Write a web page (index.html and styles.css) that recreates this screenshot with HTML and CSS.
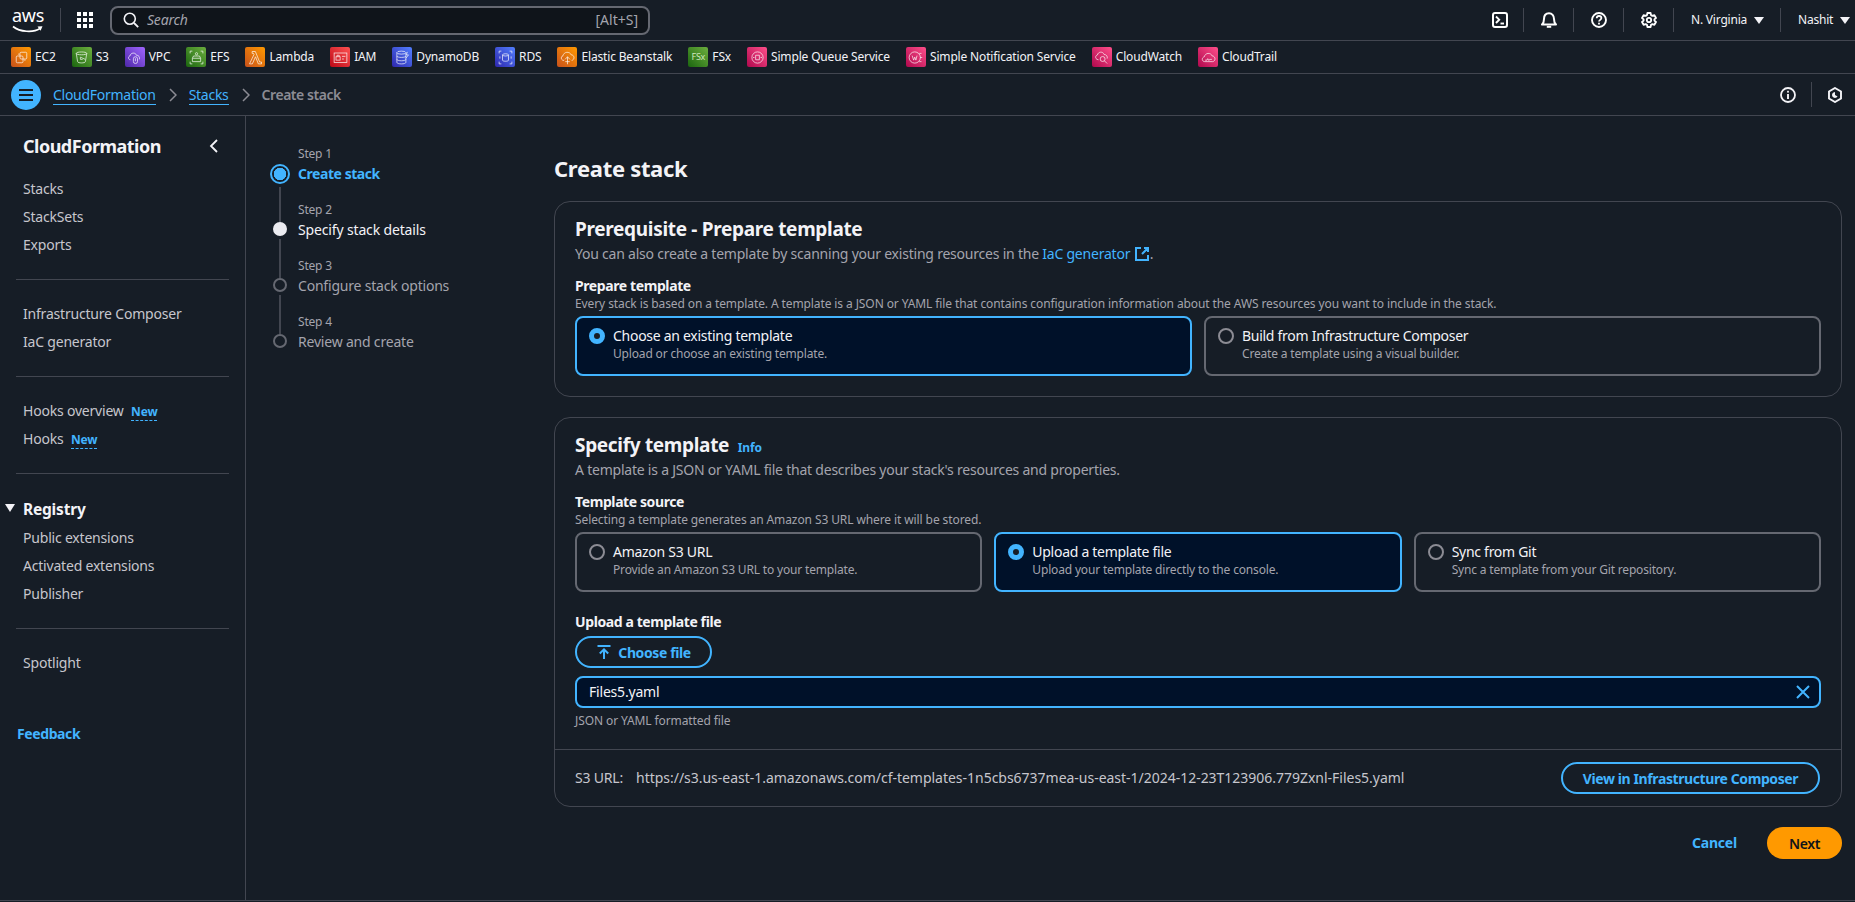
FILE: index.html
```html
<!DOCTYPE html>
<html lang="en">
<head>
    <meta charset="UTF-8">
    <meta name="viewport" content="width=device-width, initial-scale=1.0">
    <title>Create stack - CloudFormation</title>
    <link rel="stylesheet" href="styles.css">
</head>
<body>
    <!-- Top navigation -->
    <header class="topbar">
        <div class="aws-logo">
            <span class="aws-word">aws</span>
            <svg class="aws-smile" viewBox="0 0 32 9" width="32" height="9"><path d="M1 1.5C8 7 21 8 28 3.5" fill="none" stroke="#fff" stroke-width="1.7"/><path d="M25.5 1.6L30.5 1.2 28.6 5.8" fill="#fff"/></svg>
        </div>
        <span class="top-divider first"></span>
        <svg class="grid-icon" viewBox="0 0 16 16" width="16" height="16"><g fill="#fff"><rect x="0" y="0" width="4" height="4"/><rect x="6" y="0" width="4" height="4"/><rect x="12" y="0" width="4" height="4"/><rect x="0" y="6" width="4" height="4"/><rect x="6" y="6" width="4" height="4"/><rect x="12" y="6" width="4" height="4"/><rect x="0" y="12" width="4" height="4"/><rect x="6" y="12" width="4" height="4"/><rect x="12" y="12" width="4" height="4"/></g></svg>
        <div class="search">
            <svg viewBox="0 0 16 16" width="16" height="16"><circle cx="6.8" cy="6.8" r="5.5" fill="none" stroke="#f3f3f7" stroke-width="1.6"/><path d="M11 11l4.2 4.2" stroke="#f3f3f7" stroke-width="1.8"/></svg>
            <span class="search-text">Search</span>
            <span class="search-key">[Alt+S]</span>
        </div>
        <div class="top-right">
            <span class="top-icon"><svg viewBox="0 0 16 16" width="16" height="16"><rect x="1" y="1" width="14" height="14" rx="2" fill="none" stroke="#fff" stroke-width="2"/><path d="M4 4.5L7.2 7.7 4 11" fill="none" stroke="#fff" stroke-width="1.9"/><path d="M8.5 11.5H12" stroke="#fff" stroke-width="1.9"/></svg></span>
            <span class="top-divider"></span>
            <span class="top-icon"><svg viewBox="0 0 16 16" width="16" height="16"><path d="M1 12.5h14c-1.8-1.6-2-3-2-5.5C13 3.5 11 1.3 8 1.3S3 3.500 3 7c0 2.500-.2 3.900-2 5.500z" fill="none" stroke="#fff" stroke-width="2" stroke-linejoin="round"/><path d="M5.800 14.800h4.400" stroke="#fff" stroke-width="2"/></svg></span>
            <span class="top-divider"></span>
            <span class="top-icon"><svg viewBox="0 0 16 16" width="16" height="16"><circle cx="8" cy="8" r="7" fill="none" stroke="#fff" stroke-width="1.9"/><path d="M5.700 6.200C5.800 4.800 6.800 4 8 4c1.400 0 2.400.9 2.400 2.100 0 1.700-2.400 1.800-2.400 3.500" fill="none" stroke="#fff" stroke-width="1.8"/><rect x="7.100" y="10.700" width="1.800" height="1.800" fill="#fff"/></svg></span>
            <span class="top-divider"></span>
            <span class="top-icon"><svg viewBox="0 0 16 16" width="16" height="16"><path d="M6.400 1h3.200l.4 2.100 1.400.8 2-.7 1.600 2.800-1.600 1.400v1.200l1.600 1.400-1.600 2.800-2-.7-1.400.8-.4 2.100H6.400L6 12.900l-1.400-.8-2 .7L1 10l1.600-1.400V7.400L1 6l1.600-2.800 2 .7L6 3.100z" fill="none" stroke="#fff" stroke-width="1.800" stroke-linejoin="round"/><circle cx="8" cy="8" r="2.200" fill="none" stroke="#fff" stroke-width="1.800"/></svg></span>
            <span class="top-divider"></span>
            <span class="top-menu region">N. Virginia<i class="caret"></i></span>
            <span class="top-divider"></span>
            <span class="top-menu user">Nashit<i class="caret"></i></span>
        </div>
    </header>

    <!-- Pinned services -->
    <nav class="favbar">
        <a class="fav"><span class="svc orange"><svg viewBox="0 0 20 20"><rect x="8" y="3" width="9" height="9" rx="1.500"/><rect x="3" y="8" width="9" height="9" rx="1.500"/><path d="M5.500 5.500h2M14.500 12.500v2"/></svg></span>EC2</a>
        <a class="fav"><span class="svc green"><svg viewBox="0 0 20 20"><path d="M3 4.500c0-2.500 14-2.500 14 0l-1.800 11c-.4 2.300-10 2.300-10.400 0z"/><path d="M3 4.500c0 2.500 14 2.500 14 0"/><path d="M8.500 9.500l6.500 3M8.500 9.500v3h3"/></svg></span>S3</a>
        <a class="fav"><span class="svc purple"><svg viewBox="0 0 20 20"><path d="M4.500 13C1.500 13 1 8.500 4 8c.3-4.500 7.500-5.500 8.500-1 3-.3 5 2.500 4 5.500"/><rect x="8.500" y="9" width="5.500" height="9" rx="2.700"/><path d="M11.200 11v4"/></svg></span>VPC</a>
        <a class="fav"><span class="svc green"><svg viewBox="0 0 20 20"><path d="M6 8h8l1.500 3v4.500h-11V11zM4.500 11h11"/><circle cx="10" cy="5" r="1.500"/><path d="M1.500 4.500V1.500h3M15.500 1.500h3v3M1.500 15.500v3h3M15.500 18.500h3v-3"/></svg></span>EFS</a>
        <a class="fav"><span class="svc orange"><svg viewBox="0 0 20 20"><path d="M5.500 2h4.300l5.700 14H18v2.500h-4.200L10 9 5.800 18.500H2L8 6 7.300 4.500H5.500z"/></svg></span>Lambda</a>
        <a class="fav"><span class="svc red"><svg viewBox="0 0 20 20"><rect x="1.500" y="4" width="17" height="12.500"/><rect x="4" y="9" width="5.500" height="4.500"/><path d="M5.300 9V7h3v2M12 8.500h4.500M12 12h2.500"/></svg></span>IAM</a>
        <a class="fav"><span class="svc blue"><svg viewBox="0 0 20 20"><ellipse cx="8.500" cy="3.500" rx="6" ry="2"/><path d="M2.500 3.500v13c0 2.700 12 2.700 12 0v-13M2.500 8c0 2.500 12 2.500 12 0M2.500 12.500c0 2.500 12 2.500 12 0"/><path d="M14.500 11l3.500-4.500h-3l1.500-4"/></svg></span>DynamoDB</a>
        <a class="fav"><span class="svc blue"><svg viewBox="0 0 20 20"><ellipse cx="10" cy="6.500" rx="4" ry="1.500"/><path d="M6 6.500v7c0 2 8 2 8 0v-7"/><path d="M1.500 4.500v-3h3M15.500 1.500h3v3M1.500 15.500v3h3M15.500 18.500h3v-3M2.500 8.500v3M17.500 8.500v3"/></svg></span>RDS</a>
        <a class="fav"><span class="svc orange"><svg viewBox="0 0 20 20"><path d="M5.500 14C1 14 .5 8.500 4 7.700 5 2 13 1.500 15 6.500c4.500 0 5 6.500.5 7.500"/><path d="M10 19V9M6.800 12.500L10 9l3.200 3.500M7 15.500h6"/></svg></span>Elastic Beanstalk</a>
        <a class="fav"><span class="svc green"><span class="fsx">FSx</span></span>FSx</a>
        <a class="fav"><span class="svc pink"><svg viewBox="0 0 20 20"><circle cx="10" cy="10" r="7.500"/><path d="M7.500 7h5v6h-5zM4 10h2M14 10h2"/></svg></span>Simple Queue Service</a>
        <a class="fav"><span class="svc pink"><svg viewBox="0 0 20 20"><circle cx="9" cy="10" r="7.500"/><path d="M5.500 7.500l2 6L9 9.500l1.500 4 1.500-6M15 4.500h3M16 10h3M15 15.500h3"/></svg></span>Simple Notification Service</a>
        <a class="fav"><span class="svc pink"><svg viewBox="0 0 20 20"><path d="M6 13C1.500 13 1 7.500 4.500 6.700 5.500 2 12 1.500 13.500 6c3 0 5 2.500 4 5.500"/><circle cx="11.500" cy="12" r="3.300"/><path d="M14 14.500l3.500 3.500"/></svg></span>CloudWatch</a>
        <a class="fav"><span class="svc pink"><svg viewBox="0 0 20 20"><path d="M5 15.500C1 15.500.5 10 4.500 9 5.500 3.500 13 3 15 8c4.500 0 5 7 .5 7.500z"/><path d="M5.500 13.500h2.500l1-2 1.500 2.500 1-1.500h3"/></svg></span>CloudTrail</a>
    </nav>

    <!-- Breadcrumbs -->
    <div class="crumbbar">
        <span class="menu-btn"><svg viewBox="0 0 16 14" width="16" height="14"><path d="M1 2h14M1 7h14M1 12h14" stroke="#161d26" stroke-width="2"/></svg></span>
        <a class="crumb">CloudFormation</a>
        <svg class="crumb-sep" viewBox="0 0 8 14" width="8" height="14"><path d="M1 1l6 6-6 6" fill="none" stroke="#8c8c94" stroke-width="1.500"/></svg>
        <a class="crumb">Stacks</a>
        <svg class="crumb-sep" viewBox="0 0 8 14" width="8" height="14"><path d="M1 1l6 6-6 6" fill="none" stroke="#8c8c94" stroke-width="1.500"/></svg>
        <span class="crumb-current">Create stack</span>
        <div class="crumb-right">
            <svg viewBox="0 0 16 16" width="16" height="16"><circle cx="8" cy="8" r="7" fill="none" stroke="#f3f3f7" stroke-width="1.800"/><path d="M8 7v5" stroke="#f3f3f7" stroke-width="1.900"/><rect x="7.100" y="3.800" width="1.800" height="1.800" fill="#f3f3f7"/></svg>
            <span class="crumb-divider"></span>
            <svg viewBox="0 0 16 16" width="16" height="16"><path d="M8 1l6 3.500v7L8 15l-6-3.500v-7z" fill="none" stroke="#f3f3f7" stroke-width="1.900"/><path d="M8 5a3 3 0 1 0 2.600 4.500L8 8z" fill="#f3f3f7"/></svg>
        </div>
    </div>

    <div class="layout">
        <!-- Side navigation -->
        <aside class="sidenav">
            <div class="sidenav-head">
                <h2>CloudFormation</h2>
                <svg viewBox="0 0 10 16" width="10" height="16"><path d="M8 2L2 8l6 6" fill="none" stroke="#f3f3f7" stroke-width="1.800"/></svg>
            </div>
            <ul class="nav-list first">
                <li>Stacks</li>
                <li>StackSets</li>
                <li>Exports</li>
            </ul>
            <hr>
            <ul class="nav-list">
                <li>Infrastructure Composer</li>
                <li>IaC generator</li>
            </ul>
            <hr>
            <ul class="nav-list">
                <li>Hooks overview <span class="new">New</span></li>
                <li>Hooks <span class="new">New</span></li>
            </ul>
            <hr>
            <div class="nav-group"><i class="group-arrow"></i>Registry</div>
            <ul class="nav-list">
                <li>Public extensions</li>
                <li>Activated extensions</li>
                <li>Publisher</li>
            </ul>
            <hr>
            <ul class="nav-list">
                <li>Spotlight</li>
            </ul>
            <a class="feedback">Feedback</a>
        </aside>

        <!-- Wizard steps -->
        <ol class="steps">
            <li class="step current">
                <div class="step-mark"><span class="seg hidden"></span><span class="dot"></span><span class="seg"></span></div>
                <div><div class="step-num">Step 1</div><div class="step-title">Create stack</div></div>
            </li>
            <li class="step done">
                <div class="step-mark"><span class="seg"></span><span class="dot"></span><span class="seg"></span></div>
                <div><div class="step-num">Step 2</div><div class="step-title">Specify stack details</div></div>
            </li>
            <li class="step">
                <div class="step-mark"><span class="seg"></span><span class="dot"></span><span class="seg"></span></div>
                <div><div class="step-num">Step 3</div><div class="step-title">Configure stack options</div></div>
            </li>
            <li class="step">
                <div class="step-mark"><span class="seg"></span><span class="dot"></span></div>
                <div><div class="step-num">Step 4</div><div class="step-title">Review and create</div></div>
            </li>
        </ol>

        <main class="content">
            <h1>Create stack</h1>

            <section class="card">
                <div class="card-body">
                    <h3>Prerequisite - Prepare template</h3>
                    <p class="card-desc">You can also create a template by scanning your existing resources in the <a class="link">IaC generator <svg viewBox="0 0 16 16" width="16" height="16"><path d="M7 2H2v12h12V9M10 2h4v4M14 2L8 8" fill="none" stroke="#42b4ff" stroke-width="2"/></svg></a>.</p>
                    <div class="field-label">Prepare template</div>
                    <div class="field-desc">Every stack is based on a template. A template is a JSON or YAML file that contains configuration information about the AWS resources you want to include in the stack.</div>
                    <div class="tiles two">
                        <div class="tile selected"><span class="radio"></span><div><div class="tile-title">Choose an existing template</div><div class="tile-desc">Upload or choose an existing template.</div></div></div>
                        <div class="tile"><span class="radio"></span><div><div class="tile-title">Build from Infrastructure Composer</div><div class="tile-desc">Create a template using a visual builder.</div></div></div>
                    </div>
                </div>
            </section>

            <section class="card">
                <div class="card-body">
                    <h3>Specify template <a class="info">Info</a></h3>
                    <p class="card-desc">A template is a JSON or YAML file that describes your stack's resources and properties.</p>
                    <div class="field-label">Template source</div>
                    <div class="field-desc">Selecting a template generates an Amazon S3 URL where it will be stored.</div>
                    <div class="tiles three">
                        <div class="tile"><span class="radio"></span><div><div class="tile-title">Amazon S3 URL</div><div class="tile-desc">Provide an Amazon S3 URL to your template.</div></div></div>
                        <div class="tile selected"><span class="radio"></span><div><div class="tile-title">Upload a template file</div><div class="tile-desc">Upload your template directly to the console.</div></div></div>
                        <div class="tile"><span class="radio"></span><div><div class="tile-title">Sync from Git</div><div class="tile-desc">Sync a template from your Git repository.</div></div></div>
                    </div>
                    <div class="field-label upload">Upload a template file</div>
                    <button class="btn choose"><svg viewBox="0 0 16 16" width="16" height="16"><path d="M1.500 2h13M8 15V5.500M3.800 9.500L8 5.300l4.200 4.200" fill="none" stroke="#42b4ff" stroke-width="2"/></svg>Choose file</button>
                    <div class="file-input"><span>Files5.yaml</span><svg viewBox="0 0 16 16" width="16" height="16"><path d="M2 2l12 12M14 2L2 14" stroke="#42b4ff" stroke-width="2"/></svg></div>
                    <div class="field-desc helper">JSON or YAML formatted file</div>
                </div>
                <div class="card-foot">
                    <span class="s3-label">S3 URL:</span>
                    <span class="s3-url">https://s3.us-east-1.amazonaws.com/cf-templates-1n5cbs6737mea-us-east-1/2024-12-23T123906.779Zxnl-Files5.yaml</span>
                    <button class="btn view">View in Infrastructure Composer</button>
                </div>
            </section>

            <div class="actions">
                <a class="cancel">Cancel</a>
                <button class="btn next">Next</button>
            </div>
        </main>
    </div>
</body>
</html>
```

FILE: styles.css
```css
* {
    box-sizing: border-box;
}

html, body {
    height: 902px;
    overflow: hidden;
}

body {
    margin: 0;
    background-color: #161d26;
    color: #c6c6cd;
    font-family: "Noto Sans", Arial, sans-serif;
    font-size: 14px;
    line-height: 20px;
    letter-spacing: -0.2px;
}

a {
    cursor: pointer;
}

/* Top navigation */
.topbar {
    display: flex;
    align-items: center;
    height: 41px;
    border-bottom: 1px solid #424650;
    padding-left: 12px;
    color: #f3f3f7;
}

.aws-logo {
    display: flex;
    flex-direction: column;
    width: 32px;
    height: 28px;
    align-items: center;
}

.aws-word {
    font-size: 18px;
    line-height: 19px;
    color: #fff;
    letter-spacing: -0.3px;
}

.aws-smile {
    display: block;
}

.top-divider {
    width: 1px;
    height: 24px;
    background-color: #424650;
}

.top-divider.first {
    margin-left: 16px;
}

.grid-icon {
    margin-left: 16px;
}

.search {
    display: flex;
    align-items: center;
    width: 540px;
    height: 29px;
    margin-left: 17px;
    padding: 0 10px 0 11px;
    background-color: #0f141a;
    border: 2px solid #656871;
    border-radius: 8px;
}

.search-text {
    margin-left: 8px;
    font-style: italic;
    color: #a4a4ad;
}

.search-key {
    margin-left: auto;
    color: #a4a4ad;
    letter-spacing: 0;
}

.top-right {
    display: flex;
    align-items: center;
    margin-left: auto;
}

.top-icon {
    display: flex;
    justify-content: center;
    width: 49px;
}

.top-icon:first-child {
    width: 46px;
}

.top-menu {
    display: flex;
    align-items: center;
    font-size: 12px;
    color: #f3f3f7;
}

.region {
    width: 106px;
    padding-left: 17px;
}

.user {
    width: 74px;
    padding-left: 17px;
}

.caret {
    width: 0;
    height: 0;
    margin-left: 7px;
    border-left: 5px solid transparent;
    border-right: 5px solid transparent;
    border-top: 7px solid #f3f3f7;
}

/* Pinned services */
.favbar {
    display: flex;
    align-items: center;
    gap: 16px;
    height: 33px;
    padding-left: 11px;
    border-bottom: 1px solid #424650;
}

.fav {
    display: flex;
    align-items: center;
    gap: 4px;
    color: #f3f3f7;
    font-size: 12px;
    letter-spacing: -0.16px;
    white-space: nowrap;
}

.svc {
    display: flex;
    align-items: center;
    justify-content: center;
    width: 20px;
    height: 20px;
    border-radius: 2px;
}

.svc svg {
    width: 15px;
    height: 15px;
    fill: none;
    stroke: #fff;
    stroke-width: 1;
    opacity: 0.9;
}

.orange { background: linear-gradient(45deg, #c8511b, #ff9900); }
.green { background: linear-gradient(45deg, #1b660f, #6cae3e); }
.purple { background: linear-gradient(45deg, #4d27a8, #a166ff); }
.red { background: linear-gradient(45deg, #bd0816, #ff5252); }
.blue { background: linear-gradient(45deg, #2e27ad, #527fff); }
.pink { background: linear-gradient(45deg, #b0084d, #ff4f8b); }

.fsx {
    font-size: 9px;
    color: #cfe6bd;
    letter-spacing: -0.3px;
}

/* Breadcrumbs */
.crumbbar {
    display: flex;
    align-items: center;
    height: 42px;
    padding-left: 11px;
    border-bottom: 1px solid #424650;
}

.menu-btn {
    display: flex;
    align-items: center;
    justify-content: center;
    width: 30px;
    height: 30px;
    margin-right: 12px;
    border-radius: 50%;
    background-color: #42b4ff;
}

.crumb {
    color: #42b4ff;
    border-bottom: 1px solid #42b4ff;
    line-height: 19px;
    letter-spacing: -0.27px;
}

.crumb-sep {
    margin: 0 12px 0 13px;
}

.crumb-current {
    color: #8c8c94;
    font-weight: 600;
    letter-spacing: -0.45px;
}

.crumb-right {
    display: flex;
    align-items: center;
    margin-left: auto;
    padding-right: 12px;
}

.crumb-divider {
    width: 1px;
    height: 25px;
    margin: 0 15px;
    background-color: #424650;
}

/* Page layout */
.layout {
    display: grid;
    grid-template-columns: 246px 308px 1301px;
    height: 785px;
    border-bottom: 1px solid #424650;
}

.sidenav {
    border-right: 1px solid #424650;
    padding: 19px 16px 0;
}

.sidenav-head {
    display: flex;
    align-items: center;
    justify-content: space-between;
    padding: 0 10px 0 7px;
}

.sidenav-head h2 {
    margin: 0;
    font-size: 18px;
    line-height: 22px;
    color: #f3f3f7;
    font-weight: 700;
    letter-spacing: -0.5px;
}

.nav-list {
    margin: 0;
    padding: 0 0 0 7px;
    list-style: none;
}

.nav-list.first {
    margin-top: 18px;
}

.nav-list li {
    height: 28px;
    line-height: 28px;
    white-space: nowrap;
}

.sidenav hr {
    margin: 20px 0;
    border: 0;
    border-top: 1px solid #424650;
}

.new {
    margin-left: 4px;
    color: #42b4ff;
    font-size: 12px;
    font-weight: 700;
    border-bottom: 1px dashed #42b4ff;
}

.nav-group {
    position: relative;
    height: 30px;
    padding: 1px 0 0 7px;
    line-height: 28px;
    color: #f3f3f7;
    font-weight: 700;
    font-size: 15.500px;
}

.group-arrow {
    position: absolute;
    left: -11px;
    top: 10px;
    border-left: 5.500px solid transparent;
    border-right: 5.500px solid transparent;
    border-top: 8px solid #f3f3f7;
}

.feedback {
    display: block;
    margin-top: 47px;
    color: #42b4ff;
    font-weight: 700;
    padding-left: 1px;
    letter-spacing: -0.4px;
}

/* Wizard steps */
.steps {
    margin: 0;
    padding: 28px 0 0 24px;
    list-style: none;
}

.step {
    display: flex;
    height: 56px;
    gap: 8px;
}

.step-mark {
    display: flex;
    flex-direction: column;
    align-items: center;
    width: 20px;
    height: 56px;
}

.seg {
    width: 2px;
    background-color: #424650;
}

.seg:first-child {
    height: 22px;
    flex: none;
}

.seg:last-child {
    flex: 1;
    margin-top: 3px;
}

.seg.hidden {
    background-color: transparent;
}

.dot {
    flex: none;
    width: 14px;
    height: 14px;
    border: 2px solid #656871;
    border-radius: 50%;
}

.step-num {
    font-size: 12px;
    line-height: 20px;
    color: #a4a4ad;
}

.step-title {
    line-height: 20px;
    color: #a4a4ad;
    white-space: nowrap;
}

.step.done .dot {
    background-color: #ebebf0;
    border-color: #ebebf0;
}

.step.done .step-title {
    color: #f3f3f7;
    letter-spacing: -0.15px;
}

.step.current .dot {
    width: 20px;
    height: 20px;
    margin-top: -2px;
    border-color: #42b4ff;
    background: radial-gradient(circle, #42b4ff 0 6px, transparent 6.500px);
}

.step.current .step-title {
    color: #42b4ff;
    font-weight: 700;
    letter-spacing: -0.45px;
}

/* Main content */
.content {
    padding: 37px 13px 0 0;
}

h1 {
    margin: 0 0 18px;
    font-size: 22px;
    line-height: 30px;
    font-weight: 700;
    color: #f3f3f7;
    letter-spacing: -0.3px;
}

.card {
    margin-bottom: 20px;
    border: 1px solid #424650;
    border-radius: 16px;
}

.card-body {
    padding: 16px 20px 20px;
}

h3 {
    height: 22px;
    margin: 0;
    font-size: 19px;
    line-height: 22px;
    font-weight: 700;
    color: #f3f3f7;
    letter-spacing: -0.32px;
}

.card-desc {
    margin: 4px 0 0;
    color: #a4a4ad;
    letter-spacing: -0.22px;
}

.link {
    color: #42b4ff;
}

.link svg {
    vertical-align: -3px;
}

.info {
    margin-left: 4px;
    font-size: 12px;
    color: #42b4ff;
    letter-spacing: -0.1px;
}

.field-label {
    margin-top: 12px;
    font-weight: 700;
    color: #f3f3f7;
    letter-spacing: -0.4px;
}

.field-label.upload {
    margin-top: 20px;
}

.field-desc {
    font-size: 12px;
    line-height: 16px;
    color: #a4a4ad;
    letter-spacing: -0.1px;
    white-space: nowrap;
}

.tiles {
    display: grid;
    gap: 12px;
    margin-top: 4px;
}

.tiles.two {
    grid-template-columns: 1fr 1fr;
}

.tiles.three {
    grid-template-columns: 1fr 1fr 1fr;
}

.tile {
    display: flex;
    gap: 8px;
    height: 60px;
    padding: 8px 12px;
    border: 2px solid #656871;
    border-radius: 8px;
}

.tile-title {
    color: #f3f3f7;
    white-space: nowrap;
    letter-spacing: -0.28px;
}

.tile-desc {
    font-size: 12px;
    line-height: 16px;
    color: #a4a4ad;
    letter-spacing: -0.17px;
    white-space: nowrap;
}

.radio {
    flex: none;
    width: 16px;
    height: 16px;
    margin-top: 2px;
    border: 2px solid #8c8c94;
    border-radius: 50%;
}

.tile.selected {
    background-color: #001129;
    border-color: #42b4ff;
}

.tile.selected .radio {
    border: 5px solid #42b4ff;
    background-color: #161d26;
}

.btn {
    font-family: inherit;
    font-size: 14px;
    font-weight: 700;
    letter-spacing: -0.4px;
    border-radius: 20px;
    cursor: pointer;
}

.choose {
    display: flex;
    align-items: center;
    justify-content: center;
    gap: 6px;
    width: 137px;
    height: 32px;
    margin-top: 4px;
    padding: 0;
    background: none;
    color: #42b4ff;
    border: 2px solid #42b4ff;
}

.file-input {
    display: flex;
    align-items: center;
    justify-content: space-between;
    height: 32px;
    margin-top: 8px;
    padding: 0 8px 0 12px;
    background-color: #001129;
    border: 2px solid #42b4ff;
    border-radius: 8px;
    color: #f3f3f7;
}

.helper {
    margin-top: 5px;
}

.card-foot {
    display: flex;
    align-items: center;
    height: 57px;
    padding: 0 21px 0 20px;
    border-top: 1px solid #424650;
}

.s3-label {
    width: 61px;
}

.s3-url {
    letter-spacing: -0.02px;
}

.view {
    margin-left: auto;
    width: 259px;
    height: 32px;
    padding: 0;
    background: none;
    color: #42b4ff;
    border: 2px solid #42b4ff;
}

.actions {
    display: flex;
    align-items: center;
    justify-content: flex-end;
    gap: 30px;
}

.cancel {
    color: #42b4ff;
    font-weight: 700;
}

.next {
    width: 75px;
    height: 32px;
    padding: 0;
    background-color: #ff9900;
    color: #0f141a;
    border: 0;
    font-weight: 600;
}
```
